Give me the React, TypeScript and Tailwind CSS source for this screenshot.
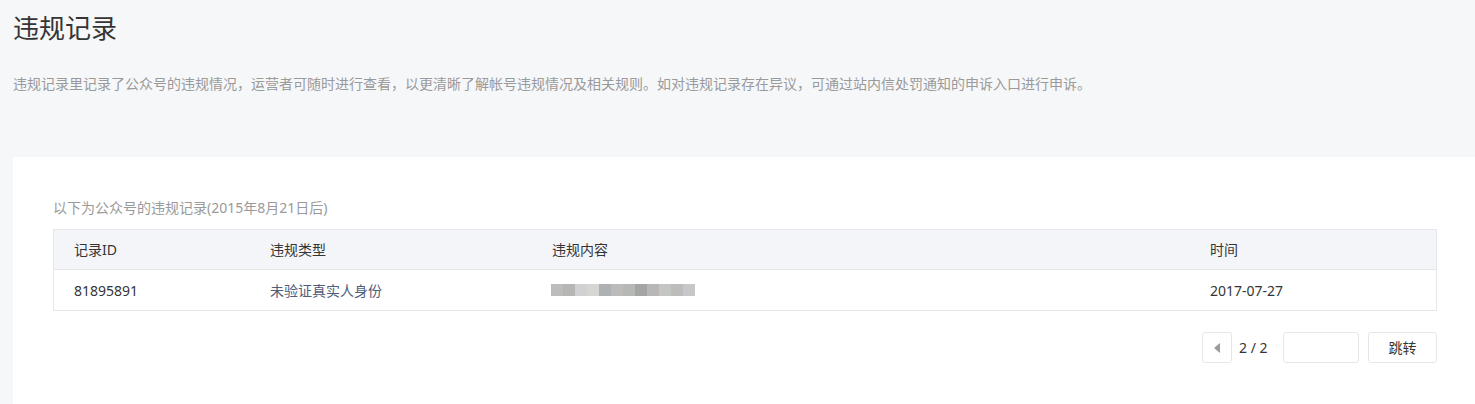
const font = "font-['Noto_Sans','Noto_Sans_CJK_SC',sans-serif]";

const mosaic = [
  "#bcbcbc", "#b6b6b4", "#d1d1d4", "#d6d6d4", "#aeb1b3", "#bbbbbb",
  "#b6b8b6", "#a5a5a5", "#b8b6b6", "#c4c6c4", "#bcbcba", "#c8c6c8",
];

const Blurred = () => (
  <div className="flex h-3">
    {mosaic.map((c, i) => (
      <div key={i} className="w-3 h-3" style={{ backgroundColor: c }} />
    ))}
  </div>
);

export default function App() {
  return (
    <div className={`${font} bg-[#f6f7f9] h-[404px] pl-[13px] overflow-hidden`}>
      <h2 className="pt-[10px] text-[26px] leading-[36px] text-[#353535] font-normal">违规记录</h2>
      <p className="mt-[28px] text-[14px] leading-[20px] text-[#9a9a9a]">
        违规记录里记录了公众号的违规情况，运营者可随时进行查看，以更清晰了解帐号违规情况及相关规则。如对违规记录存在异议，可通过站内信处罚通知的申诉入口进行申诉。
      </p>

      <div className="mt-[63px] bg-white h-[260px] pl-10 pr-[38px] pt-[41px]">
        <p className="text-[14px] leading-[20px] text-[#9a9a9a]">以下为公众号的违规记录(2015年8月21日后)</p>

        <div className="mt-[11px] border border-[#e4e8eb] text-[14px] text-[#353535]">
          <div className="grid grid-cols-[196px_282px_658px_1fr] h-[40px] items-center bg-[#f4f5f9] border-b border-[#e4e8eb]">
            <div className="pl-[20px]">记录ID</div>
            <div className="pl-[20px]">违规类型</div>
            <div className="pl-[20px]">违规内容</div>
            <div className="pl-[20px]">时间</div>
          </div>
          <div className="grid grid-cols-[196px_282px_658px_1fr] h-[40px] items-center">
            <div className="pl-[20px]">81895891</div>
            <div className="pl-[20px] text-[#4f5d78]">未验证真实人身份</div>
            <div className="pl-[19px]">
              <Blurred />
            </div>
            <div className="pl-[20px]">2017-07-27</div>
          </div>
        </div>

        <div className="mt-[21px] flex justify-end items-center text-[14px] text-[#353535]">
          <button className="w-[30px] h-[31px] border border-[#e4e8eb] rounded-[3px] bg-white flex items-center justify-center">
            <svg width="6" height="10" viewBox="0 0 6 10">
              <path d="M6 0 L0 5 L6 10 Z" fill="#9a9a9a" />
            </svg>
          </button>
          <span className="ml-[7px] w-[33px]">2 / 2</span>
          <input className="ml-[11px] w-[76px] h-[31px] border border-[#e4e8eb] rounded-[3px] bg-white outline-none px-2" />
          <button className="ml-[9px] w-[69px] h-[31px] border border-[#e4e8eb] rounded-[3px] bg-white text-[14px] text-[#353535]">
            跳转
          </button>
        </div>
      </div>
    </div>
  );
}
